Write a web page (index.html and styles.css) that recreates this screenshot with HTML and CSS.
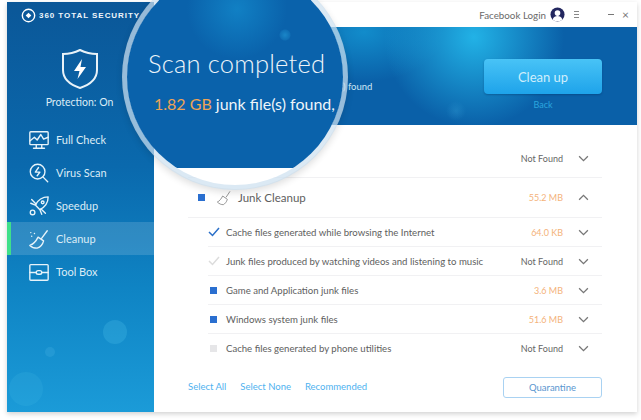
FILE: index.html
```html
<!DOCTYPE html>
<html>
   <head>
      <meta charset="UTF-8">
      <meta name="viewport" content="width=device-width, initial-scale=1.0">
      <title>360 Total Security</title>
      <link rel="stylesheet" href="styles.css">
   </head>
   <body>
      <div class="window">
         <!-- left column -->
         <div class="sidebar">
            <span class="bubble b1"></span>
            <span class="bubble b2"></span>
            <span class="bubble b3"></span>
            <div class="brand">
               <svg class="brand-logo" viewBox="0 0 16 16"><circle cx="8" cy="8" r="6.6" fill="none" stroke="#fff" stroke-width="1.5"/><path d="M5 8l3-3 3 3-3 3z" fill="#fff"/></svg>
               <span>360 TOTAL SECURITY</span>
            </div>
            <div class="status">
               <svg class="shield" viewBox="0 0 40 42"><path d="M20 2 C26 5 32 6 37 6 V22 C37 31 29 37 20 40 C11 37 3 31 3 22 V6 C8 6 14 5 20 2z" fill="none" stroke="#e8f2f8" stroke-width="2"/><path d="M22 11 L14 23 H19.5 L17.500 31 L26 19 H20.500z" fill="#fff"/></svg>
               <div class="status-text">Protection: On</div>
            </div>
            <div class="nav">
               <div class="nav-item">
                  <svg viewBox="0 0 24 24"><rect x="2" y="3" width="20" height="14" rx="1"/><path d="M2 13l5-4 3 3 4-6 3 5 5-2M9 17v4M15 17v4M6 21h12"/></svg>
                  Full Check
               </div>
               <div class="nav-item">
                  <svg viewBox="0 0 24 24"><circle cx="10.500" cy="10.500" r="8"/><path d="M16.500 16.500l5 5M11.500 6l-3.500 5h5l-3 4"/></svg>
                  Virus Scan
               </div>
               <div class="nav-item">
                  <svg viewBox="0 0 24 24"><path d="M22 2c-6 0-11 3-14 9l5 5c6-3 9-8 9-14zM8 11l-5-2M4 5l5 5M13 16l2 5M19 20l-5-5"/><circle cx="5" cy="19" r="2.500"/><circle cx="16" cy="8" r="1.500"/></svg>
                  Speedup
               </div>
               <div class="nav-item active">
                  <svg viewBox="0 0 24 24"><path d="M21 3l-6 8M11 10l6 4c-1 4-4 7-7 8-3 0-6-1-8-3 3-1 7-5 9-9zM3 5h.1M7 6h.1M4 9h.1"/></svg>
                  Cleanup
               </div>
               <div class="nav-item">
                  <svg viewBox="0 0 24 24"><rect x="2" y="4" width="20" height="17" rx="1"/><path d="M2 12.500h7M15 12.500h7"/><rect x="9" y="10.500" width="6" height="4" rx="2"/></svg>
                  Tool Box
               </div>
            </div>
         </div>

         <div class="main">
            <div class="topbar">
               <span class="fb">Facebook Login</span>
               <svg class="avatar" viewBox="0 0 16 16"><circle cx="8" cy="8" r="7.500" fill="#23275f"/><circle cx="8" cy="6.500" r="3" fill="#fff"/><path d="M2.800 13.200c1-2.800 3-3.700 5.200-3.700s4.200.9 5.200 3.700c-1.400 1.300-3.200 2-5.200 2s-3.800-.7-5.200-2z" fill="#fff"/></svg>
               <span class="menu-icon"></span>
               <span class="min-btn"></span>
               <span class="close-btn">×</span>
            </div>

            <div class="banner">
               <div class="banner-msg">file(s) found</div>
               <div class="banner-actions">
                  <button class="clean-btn">Clean up</button>
                  <a class="back">Back</a>
               </div>
            </div>

            <div class="results">
               <div class="row group first">
                  <span class="row-label"></span>
                  <span class="value">Not Found</span>
                  <svg class="chev" viewBox="0 0 12 8"><path d="M1 1.500l5 5 5-5"/></svg>
               </div>
               <div class="row group">
                  <span class="box on"></span>
                  <svg class="broom" viewBox="0 0 24 24"><path d="M21 2l-6 9M10 9l7 5c-1 4-4 7-6 8-3 0-6-1-9-4 3-1 6-5 8-9z"/></svg>
                  <span class="row-label big">Junk Cleanup</span>
                  <span class="value size">55.2 MB</span>
                  <svg class="chev" viewBox="0 0 12 8"><path d="M1 6.500l5-5 5 5"/></svg>
               </div>
               <div class="row child">
                  <svg class="tick" viewBox="0 0 12 10"><path d="M1 5l3.500 3.500L11 1"/></svg>
                  <span class="row-label">Cache files generated while browsing the Internet</span>
                  <span class="value size">64.0 KB</span>
                  <svg class="chev" viewBox="0 0 12 8"><path d="M1 1.500l5 5 5-5"/></svg>
               </div>
               <div class="row child">
                  <svg class="tick off" viewBox="0 0 12 10"><path d="M1 5l3.500 3.500L11 1"/></svg>
                  <span class="row-label">Junk files produced by watching videos and listening to music</span>
                  <span class="value">Not Found</span>
                  <svg class="chev" viewBox="0 0 12 8"><path d="M1 1.500l5 5 5-5"/></svg>
               </div>
               <div class="row child">
                  <span class="box on"></span>
                  <span class="row-label">Game and Application junk files</span>
                  <span class="value size">3.6 MB</span>
                  <svg class="chev" viewBox="0 0 12 8"><path d="M1 1.500l5 5 5-5"/></svg>
               </div>
               <div class="row child">
                  <span class="box on"></span>
                  <span class="row-label">Windows system junk files</span>
                  <span class="value size">51.6 MB</span>
                  <svg class="chev" viewBox="0 0 12 8"><path d="M1 1.500l5 5 5-5"/></svg>
               </div>
               <div class="row child last">
                  <span class="box"></span>
                  <span class="row-label">Cache files generated by phone utilities</span>
                  <span class="value">Not Found</span>
                  <svg class="chev" viewBox="0 0 12 8"><path d="M1 1.500l5 5 5-5"/></svg>
               </div>
               <div class="foot">
                  <a>Select All</a>
                  <a>Select None</a>
                  <a>Recommended</a>
                  <button class="quarantine">Quarantine</button>
               </div>
            </div>
         </div>
      </div>

      <!-- magnifier over the window -->
      <div class="lens">
         <div class="lens-blue">
            <div class="lens-title">Scan completed</div>
            <div class="lens-sub"><b>1.82 GB</b> junk file(s) found,</div>
         </div>
      </div>
   </body>
</html>
```

FILE: styles.css
```css
body
{
   margin:0;
   padding:2px 4px 0 7px;
   height:418px;
   overflow:hidden;
   background-color:#fff;
   font-family:"Lato","Open Sans",sans-serif;
}
.window
{
   display:flex;
   width:630px;
   height:410px;
   background-color:#fff;
   box-shadow:0 2px 5px rgba(0,0,0,0.18);
}

/* left column */
.sidebar
{
   position:relative;
   overflow:hidden;
   width:147px;
   flex:none;
   color:#dcecf6;
   background-image:linear-gradient(to bottom,#0b5798 0%,#0a69ad 40%,#0f84c4 70%,#1b9bd8 100%);
}
.bubble
{
   position:absolute;
   border-radius:50%;
   background-color:rgba(90,205,240,0.22);
}
.b1 { left:96px; top:318px; width:24px; height:24px; }
.b2 { left:2px; top:370px; width:34px; height:34px; background-color:rgba(90,205,240,0.12); }
.b3 { left:38px; top:345px; width:10px; height:10px; background-color:rgba(120,215,245,0.14); }
.brand
{
   display:flex;
   align-items:center;
   gap:3px;
   padding:5px 0 0 14px;
   height:17px;
   color:#eef6fb;
   font:bold 8px "Liberation Sans",sans-serif;
   letter-spacing:0.95px;
   white-space:nowrap;
}
.brand-logo { width:15px; height:15px; flex:none; }
.status
{
   display:flex;
   flex-direction:column;
   align-items:center;
   padding-top:24px;
   padding-right:2px;
}
.shield { width:40px; height:42px; }
.status-text
{
   margin-top:6px;
   font-size:10.500px;
}
.nav { margin-top:15px; }
.nav-item
{
   display:flex;
   align-items:center;
   gap:6px;
   height:33px;
   padding-left:21px;
   font-size:11px;
   border-left:0 solid #3fe08a;
}
.nav-item svg
{
   width:22px;
   height:22px;
   fill:none;
   stroke:#e6f3fa;
   stroke-width:1.500;
   stroke-linejoin:round;
   stroke-linecap:round;
}
.nav-item.active
{
   padding-left:17px;
   border-left-width:4px;
   background-color:rgba(255,255,255,0.14);
}

/* right column */
.main
{
   flex:1;
   display:flex;
   flex-direction:column;
   min-width:0;
}
.topbar
{
   display:flex;
   align-items:center;
   justify-content:flex-end;
   height:25px;
   padding-right:8px;
   color:#6a6a6a;
   font-size:9.800px;
}
.avatar { width:15px; height:15px; margin-left:4px; }
.menu-icon
{
   width:5px;
   height:5px;
   margin-left:9px;
   border-top:1px solid #888;
   border-bottom:1px solid #888;
   background:linear-gradient(#888,#888) center/100% 1px no-repeat;
}
.min-btn
{
   width:6px;
   height:1px;
   margin-left:29px;
   background-color:#777;
}
.close-btn
{
   margin-left:8px;
   font-size:12px;
   color:#777;
}
.banner
{
   display:flex;
   justify-content:space-between;
   height:98px;
   background-color:#0a60a8;
   background-image:radial-gradient(ellipse 90px 90px at 320px 10px,#22b2e6 0%,rgba(34,178,230,0) 100%),radial-gradient(circle 10px at 302px 84px,rgba(60,160,215,0.3) 0%,rgba(60,160,215,0) 100%),radial-gradient(ellipse 80px 50px at 210px 5px,#128ccb 0%,rgba(18,140,203,0) 100%);
}
.banner-msg
{
   margin:54px 0 0 170px;
   width:58px;
   color:#cfe6f5;
   font-size:9.500px;
   white-space:nowrap;
}
.banner-actions
{
   display:flex;
   flex-direction:column;
   align-items:center;
   width:118px;
   margin:32px 35px 0 0;
}
.clean-btn
{
   width:118px;
   height:35px;
   border:0;
   border-radius:4px;
   color:#cfeefc;
   font-family:inherit;
   font-size:13px;
   background-image:linear-gradient(to bottom,#48c3f6,#1ea3ea);
   box-shadow:0 1px 2px rgba(0,40,90,0.35);
}
.back
{
   margin-top:5px;
   color:#2ba6de;
   font-size:9px;
}
.results
{
   flex:1;
   padding:14px 35px 0 34px;
   color:#5e5e5e;
}
.row
{
   display:flex;
   align-items:center;
   border-bottom:1px solid #f1f1f3;
}
.group { height:39px; gap:9px; }
.first { height:38px; }
.child
{
   height:28px;
   margin-left:20px;
   gap:6px;
}
.child.last { border-bottom:0; }
.row-label
{
   flex:1;
   font-size:9.600px;
   white-space:nowrap;
}
.row-label.big { font-size:11.500px; }
.value
{
   color:#666;
   font-size:9px;
   white-space:nowrap;
}
.size { color:#f4b27a; }
.chev
{
   width:11px;
   height:7px;
   margin:0 13px 0 6px;
   fill:none;
   stroke:#777;
   stroke-width:1.500;
}
.child .chev { margin-left:9px; }
.box
{
   width:7px;
   height:7px;
   flex:none;
   margin-left:10px;
   background-color:#e6e6e8;
}
.box.on { background-color:#2a6fd0; }
.child .box { margin-right:3px; margin-left:2px; }
.tick
{
   width:12px;
   height:10px;
   flex:none;
   fill:none;
   stroke:#2a6fc8;
   stroke-width:1.500;
}
.tick.off { stroke:#dcdcdc; }
.broom
{
   width:16px;
   height:16px;
   flex:none;
   margin:0 -3px 0 2px;
   fill:none;
   stroke:#888;
   stroke-width:1.300;
}
.foot
{
   display:flex;
   align-items:center;
   gap:14px;
   margin-top:15px;
   color:#4fb2ef;
   font-size:9.500px;
}
.foot a { margin-bottom:3px; }
.quarantine
{
   width:99px;
   height:21px;
   margin-left:auto;
   border:1px solid #a9d2f2;
   border-radius:3px;
   color:#5a96cf;
   font-family:inherit;
   font-size:9.500px;
   background-color:#fff;
}

/* magnifier */
.lens
{
   position:absolute;
   left:122px;
   top:-36px;
   width:216px;
   height:216px;
   overflow:hidden;
   border:5px solid rgba(205,225,240,0.72);
   border-radius:50%;
   background-color:#fff;
   background-clip:padding-box;
   box-shadow:0 3px 7px rgba(0,0,0,0.12);
}
.lens-blue
{
   height:199px;
   padding:78px 0 0 21px;
   box-sizing:border-box;
   color:#eef5fa;
   background-color:#0a62ab;
   background-image:radial-gradient(circle 50px at 110px 40px,#1180c4 0%,rgba(17,128,196,0) 100%),radial-gradient(circle 6px at 158px 66px,#1a86c8 0%,rgba(26,134,200,0.4) 80%,rgba(26,134,200,0) 100%);
}
.lens-title
{
   font-size:25.500px;
   font-weight:300;
   letter-spacing:0.2px;
   line-height:32px;
   white-space:nowrap;
}
.lens-sub
{
   margin:15px 0 0 6px;
   font-size:16px;
   white-space:nowrap;
}
.lens-sub b
{
   font-weight:400;
   color:#eda455;
}
```
